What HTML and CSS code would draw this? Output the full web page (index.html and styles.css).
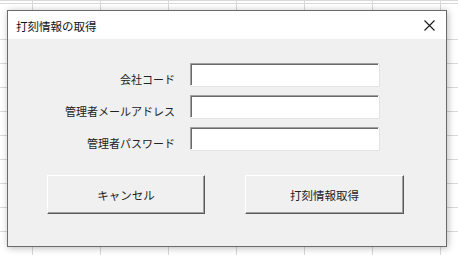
FILE: index.html
```html
<!DOCTYPE html>
<html lang="ja">
<head>
<meta charset="utf-8">
<title>打刻情報の取得</title>
<link rel="stylesheet" href="styles.css">
</head>
<body>
<div class="sheet">
  <div class="dialog">
    <div class="titlebar">
      <span class="title">打刻情報の取得</span>
      <span class="close"><svg width="11" height="11" viewBox="0 0 11 11"><path d="M0.5 0.5L10.5 10.5M10.5 0.5L0.5 10.5" stroke="#1a1a1a" stroke-width="1.1" fill="none"/></svg></span>
    </div>
    <div class="body">
      <div class="form">
        <label class="label">会社コード</label>
        <div class="input"></div>
        <label class="label">管理者メールアドレス</label>
        <div class="input"></div>
        <label class="label">管理者パスワード</label>
        <div class="input"></div>
      </div>
      <div class="buttons">
        <div class="btn btn-cancel">キャンセル</div>
        <div class="btn btn-ok">打刻情報取得</div>
      </div>
    </div>
  </div>
</div>
</body>
</html>
```
FILE: styles.css
```css
* { box-sizing: border-box; }
html, body { margin: 0; padding: 0; }
body {
  width: 458px;
  height: 255px;
  overflow: hidden;
  font-family: "Noto Sans CJK JP", "Noto Sans", sans-serif;
  color: #1e1e1e;
}
.sheet {
  width: 458px;
  height: 255px;
  padding: 10px 0 0 7px;
  background-color: #ffffff;
  background-image:
    linear-gradient(to bottom, transparent 3px, #d9d9d9 3px, #d9d9d9 4px, transparent 4px),
    repeating-linear-gradient(to bottom, transparent 0, transparent 15px, #d9d9d9 15px, #d9d9d9 16px, transparent 16px, transparent 24px),
    repeating-linear-gradient(to right, transparent 0, transparent 32px, #d9d9d9 32px, #d9d9d9 33px, transparent 33px, transparent 68px);
  background-size: 100% 100%, 100% 100%, 100% 100%;
  background-position: 0 0, 0 24px, 0 0;
  background-repeat: no-repeat, repeat-y, repeat-x;
}
.dialog {
  width: 440px;
  height: 237px;
  border: 1px solid #6b6b6b;
  background: #f0f0f0;
  box-shadow: 1px 1px 7px rgba(0,0,0,0.28);
  display: flex;
  flex-direction: column;
}
.titlebar {
  height: 28px;
  background: #ffffff;
  display: flex;
  align-items: center;
  justify-content: space-between;
  padding: 0 11px 0 8px;
  flex: none;
}
.title {
  font-size: 11.5px;
  line-height: 14px;
  color: #111;
  padding-top: 1px;
}
.close {
  display: flex;
  padding-top: 1px;
}
.body {
  flex: 1;
  padding-top: 24px;
}
.form {
  display: grid;
  grid-template-columns: 167px 189px;
  column-gap: 15px;
  row-gap: 9px;
}
.label {
  font-size: 11px;
  line-height: 14px;
  text-align: right;
  color: #222;
  padding-top: 9px;
  height: 23px;
  white-space: nowrap;
}
.input {
  height: 23px;
  background: #ffffff;
  border-top: 1px solid #a0a0a0;
  border-left: 1px solid #a0a0a0;
  border-right: 1px solid #ffffff;
  border-bottom: 1px solid #ffffff;
  box-shadow: inset 1px 1px 0 #696969, 1px 1px 0 #e3e3e3;
}
.buttons {
  display: flex;
  gap: 40px;
  padding: 25px 0 0 39px;
}
.btn {
  height: 39px;
  display: flex;
  align-items: center;
  justify-content: center;
  font-size: 11.5px;
  color: #222;
  background: #f0f0f0;
  border-top: 1px solid #ffffff;
  border-left: 1px solid #ffffff;
  border-right: 1px solid #5a5a5a;
  border-bottom: 1px solid #5a5a5a;
  box-shadow: inset -1px -1px 0 #a0a0a0;
}
.btn-cancel { width: 158px; }
.btn-ok { width: 159px; }
```
